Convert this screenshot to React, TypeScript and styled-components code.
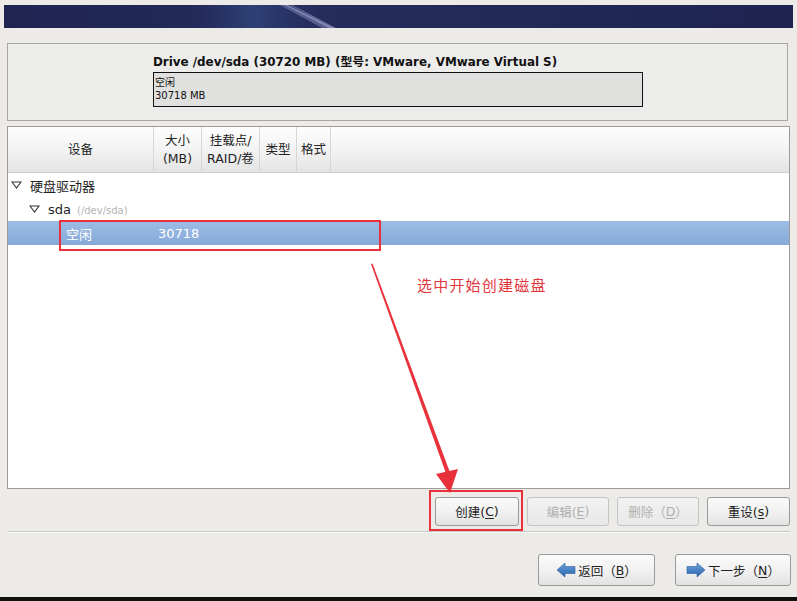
import React from 'react';
import styled, { createGlobalStyle } from 'styled-components';

const GlobalStyle = createGlobalStyle`
  body {
    margin: 0;
    background: #edebe8;
    font-family: "DejaVu Sans", "Noto Sans CJK SC", sans-serif;
  }
`;

const Screen = styled.div`
  position: relative;
  width: 797px;
  height: 601px;
  overflow: hidden;
  display: flex;
  flex-direction: column;
  background: #edebe8;
`;

const Banner = styled.div`
  margin: 5px 4px 0 4px;
  height: 23px;
  background: linear-gradient(90deg, #1f2451 0%, #252c5c 40%, #232a58 60%, #1e2350 100%);
  & svg {
    display: block;
  }
`;

const DrivePanel = styled.div`
  margin: 15px 0 0 7px;
  width: 781px;
  height: 78px;
  border: 1px solid #aaa7a3;
  background: #ececeb;
  padding: 11px 0 0 145px;
  box-sizing: border-box;
`;

const DriveTitle = styled.div`
  font-size: 11.9px;
  font-weight: bold;
  color: #111;
  line-height: 14px;
`;

const DriveBar = styled.div`
  margin-top: 3px;
  width: 490px;
  height: 35px;
  border: 1px solid #111;
  background: #e0e0df;
  box-sizing: border-box;
  padding: 3px 0 0 1px;
  font-size: 10px;
  line-height: 13px;
  color: #111;
`;

const TablePanel = styled.div`
  margin: 5px 0 0 7px;
  width: 783px;
  height: 363px;
  border: 1px solid #9d9b98;
  background: #fff;
  box-sizing: border-box;
  display: flex;
  flex-direction: column;
`;

const HeaderRow = styled.div`
  display: flex;
  height: 45px;
  background: linear-gradient(180deg, #fdfdfd 0%, #f3f3f3 50%, #e4e4e4 100%);
  border-bottom: 1px solid #cfcfcf;
  flex-shrink: 0;
`;

const HeaderCell = styled.div<{ $w?: number }>`
  ${(p) => (p.$w ? `width: ${p.$w}px;` : 'flex: 1;')}
  flex-shrink: 0;
  box-sizing: border-box;
  display: flex;
  align-items: center;
  justify-content: center;
  text-align: center;
  font-size: 12.5px;
  line-height: 18px;
  color: #222;
  border-right: 1px solid #d6d6d6;
  &:last-child {
    border-right: none;
  }
`;

const TreeRow = styled.div<{ $indent: number; $selected?: boolean }>`
  height: 24px;
  display: flex;
  align-items: center;
  padding-left: ${(p) => p.$indent}px;
  font-size: 13px;
  color: ${(p) => (p.$selected ? '#fff' : '#222')};
  background: ${(p) =>
    p.$selected ? 'linear-gradient(180deg, #9dbde5 0%, #86a9d8 100%)' : 'transparent'};
  & svg {
    margin-right: 8px;
  }
`;

const DimText = styled.span`
  font-size: 10px;
  color: #b4b4b4;
  margin-left: 6px;
  margin-top: 2px;
`;

const SizeText = styled.span`
  margin-left: 66px;
`;

const ActionRow = styled.div`
  display: flex;
  justify-content: flex-end;
  gap: 8px;
  margin: 8px 7px 0 0;
`;

const Button = styled.div<{ $w: number; $h: number; $disabled?: boolean }>`
  width: ${(p) => p.$w}px;
  height: ${(p) => p.$h}px;
  box-sizing: border-box;
  border: 1px solid ${(p) => (p.$disabled ? '#c4c4c4' : '#9a9a9a')};
  border-radius: 3px;
  background: ${(p) =>
    p.$disabled
      ? 'linear-gradient(180deg, #f2f2f2 0%, #e8e8e8 100%)'
      : 'linear-gradient(180deg, #fbfbfb 0%, #f0f0f0 55%, #e2e2e2 100%)'};
  display: flex;
  align-items: center;
  justify-content: center;
  font-size: 12.5px;
  color: ${(p) => (p.$disabled ? '#b0b0b0' : '#222')};
  & svg {
    margin-right: 2px;
  }
  & u {
    text-underline-offset: 2px;
  }
`;

const Separator = styled.div`
  margin: 5px 7px 0 8px;
  height: 1px;
  background: #c9c7c4;
  border-bottom: 1px solid #fafafa;
`;

const NavRow = styled.div`
  display: flex;
  justify-content: flex-end;
  gap: 20px;
  margin: 21px 6px 0 0;
`;

const BottomStrip = styled.div`
  margin-top: auto;
  height: 4px;
  background: #111;
`;

const Note = styled.div`
  position: absolute;
  left: 417px;
  top: 274px;
  font-family: "Noto Sans CJK SC", sans-serif;
  font-size: 15px;
  color: #e2363c;
  letter-spacing: 1.2px;
`;

const RedBox = styled.div<{ $x: number; $y: number; $w: number; $h: number }>`
  position: absolute;
  left: ${(p) => p.$x}px;
  top: ${(p) => p.$y}px;
  width: ${(p) => p.$w}px;
  height: ${(p) => p.$h}px;
  border: 2px solid #e8313a;
  box-sizing: border-box;
  pointer-events: none;
`;

const ArrowLayer = styled.svg`
  position: absolute;
  left: 0;
  top: 0;
  pointer-events: none;
`;

const Caret = () => (
  <svg width="11" height="8" viewBox="0 0 11 8">
    <path d="M1 1 L10 1 L5.5 7 Z" fill="none" stroke="#333" strokeWidth="1.1" />
  </svg>
);

const BackIcon = () => (
  <svg width="20" height="16" viewBox="0 0 20 16">
    <defs>
      <linearGradient id="bk" x1="0" y1="0" x2="0" y2="1">
        <stop offset="0" stopColor="#6aa0dc" />
        <stop offset="1" stopColor="#2a64ad" />
      </linearGradient>
    </defs>
    <path d="M1 8 L9 1 L9 4.5 L19 4.5 L19 11.5 L9 11.5 L9 15 Z" fill="url(#bk)" stroke="#2a5a9a" strokeWidth="0.6" />
  </svg>
);

const NextIcon = () => (
  <svg width="20" height="16" viewBox="0 0 20 16">
    <defs>
      <linearGradient id="nx" x1="0" y1="0" x2="0" y2="1">
        <stop offset="0" stopColor="#6aa0dc" />
        <stop offset="1" stopColor="#2a64ad" />
      </linearGradient>
    </defs>
    <path d="M19 8 L11 1 L11 4.5 L1 4.5 L1 11.5 L11 11.5 L11 15 Z" fill="url(#nx)" stroke="#2a5a9a" strokeWidth="0.6" />
  </svg>
);

export default function App() {
  return (
    <>
      <GlobalStyle />
      <Screen>
        <Banner>
          <svg width="789" height="23" viewBox="0 0 789 23">
            <defs>
              <linearGradient id="glow" x1="0" y1="0" x2="1" y2="0">
                <stop offset="0" stopColor="#2b3a70" stopOpacity="0" />
                <stop offset="0.5" stopColor="#34508a" stopOpacity="0.6" />
                <stop offset="1" stopColor="#2b3a70" stopOpacity="0" />
              </linearGradient>
            </defs>
            <rect x="180" y="0" width="140" height="23" fill="url(#glow)" />
            <path d="M276 0 L282 0 L326 23 L318 23 Z" fill="#8f93c6" opacity="0.45" />
            <path d="M281 0 L284 0 L330 23 L325 23 Z" fill="#c7c9ec" opacity="0.55" />
            <path d="M286 0 L288 0 L332 23 L329 23 Z" fill="#aeb2df" opacity="0.5" />
          </svg>
        </Banner>

        <DrivePanel>
          <DriveTitle>Drive /dev/sda (30720 MB) (型号: VMware, VMware Virtual S)</DriveTitle>
          <DriveBar>
            空闲
            <br />
            30718 MB
          </DriveBar>
        </DrivePanel>

        <TablePanel>
          <HeaderRow>
            <HeaderCell $w={146}>设备</HeaderCell>
            <HeaderCell $w={48}>
              大小
              <br />
              (MB)
            </HeaderCell>
            <HeaderCell $w={58}>
              挂载点/
              <br />
              RAID/卷
            </HeaderCell>
            <HeaderCell $w={37}>类型</HeaderCell>
            <HeaderCell $w={34}>格式</HeaderCell>
            <HeaderCell />
          </HeaderRow>
          <TreeRow $indent={3}>
            <Caret />
            硬盘驱动器
          </TreeRow>
          <TreeRow $indent={21}>
            <Caret />
            <span>sda</span>
            <DimText>(/dev/sda)</DimText>
          </TreeRow>
          <TreeRow $indent={58} $selected>
            空闲
            <SizeText>30718</SizeText>
          </TreeRow>
        </TablePanel>

        <ActionRow>
          <Button $w={84} $h={29}>
            创建(<u>C</u>)
          </Button>
          <Button $w={82} $h={29} $disabled>
            编辑(<u>E</u>)
          </Button>
          <Button $w={82} $h={29} $disabled>
            删除（<u>D</u>）
          </Button>
          <Button $w={83} $h={29}>
            重设(<u>s</u>)
          </Button>
        </ActionRow>

        <Separator />

        <NavRow>
          <Button $w={117} $h={32}>
            <BackIcon />
            返回（<u>B</u>）
          </Button>
          <Button $w={116} $h={32}>
            <NextIcon />
            下一步（<u>N</u>）
          </Button>
        </NavRow>

        <BottomStrip />

        <RedBox $x={59} $y={220} $w={322} $h={31} />
        <RedBox $x={429} $y={490} $w={94} $h={41} />
        <Note>选中开始创建磁盘</Note>
        <ArrowLayer width="797" height="601" viewBox="0 0 797 601">
          <path d="M371 264 L372.5 263.5 L452 478 L448 479 Z" fill="#e8313a" />
          <path d="M436 474 L458 469 L450 493 Z" fill="#e8313a" />
        </ArrowLayer>
      </Screen>
    </>
  );
}
